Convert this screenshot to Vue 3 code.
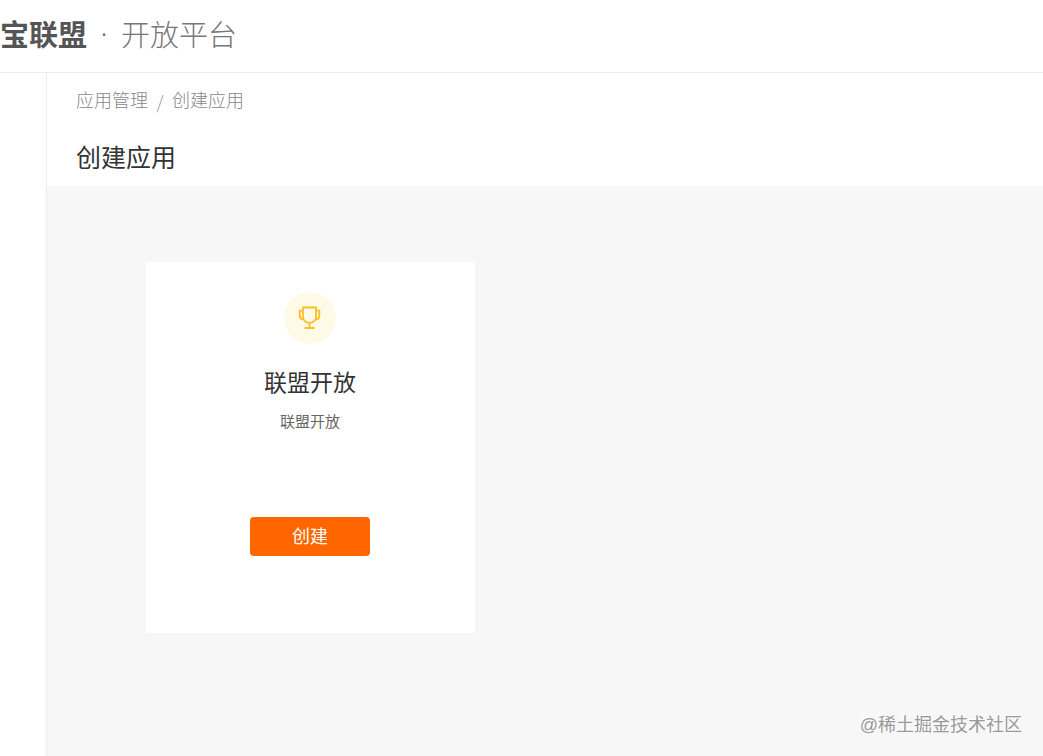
<script setup>
const crumbs = ['应用管理', '创建应用']
const apps = [{ title: '联盟开放', summary: '联盟开放' }]
</script>

<template>
  <div class="page">
    <header class="topbar">
      <strong class="brand">宝联盟</strong>
      <span class="dot">·</span>
      <span class="platform">开放平台</span>
    </header>
    <div class="body">
      <aside class="side"></aside>
      <main class="main">
        <div class="heading">
          <nav class="crumbs">
            <template v-for="(crumb, i) in crumbs" :key="crumb">
              <span v-if="i" class="slash">/</span>
              <a href="#">{{ crumb }}</a>
            </template>
          </nav>
          <h1>创建应用</h1>
        </div>
        <div class="content">
          <section v-for="app in apps" :key="app.title" class="card">
            <div class="badge">
              <svg width="24" height="24" viewBox="0 0 24 24" fill="none" stroke="#fcbe26" stroke-width="1.8">
                <path d="M5 1.500h13v9c0 3.800-2.800 6.300-6.500 6.300s-6.500-2.500-6.500-6.300z" />
                <path d="M5 4.700H1.700v5.300c0 2 1.300 3.200 3.500 3.700M18 4.700h3.300v5.300c0 2-1.300 3.200-3.500 3.700" />
                <path d="M11.500 17v5M6.500 22h10" />
              </svg>
            </div>
            <h2>{{ app.title }}</h2>
            <p>{{ app.summary }}</p>
            <button type="button">创建</button>
          </section>
        </div>
      </main>
    </div>
    <div class="watermark">@稀土掘金技术社区</div>
  </div>
</template>

<style>
body {
  margin: 0;
}
</style>

<style scoped>
.page {
  position: relative;
  display: flex;
  flex-direction: column;
  min-height: 100vh;
  background: #fff;
  color: #333;
  font-family: "Liberation Sans", "Noto Sans CJK SC", sans-serif;
}
.topbar {
  display: flex;
  align-items: center;
  box-sizing: border-box;
  height: 73px;
  padding-bottom: 6px;
  border-bottom: 1px solid #ededed;
  font-family: "Noto Sans CJK SC", sans-serif;
  font-size: 29px;
  line-height: 40px;
  white-space: nowrap;
}
.brand {
  color: #555;
  font-weight: 700;
}
.dot {
  width: 34px;
  color: #777;
  font-family: "Liberation Sans", sans-serif;
  font-size: 24px;
  text-align: center;
}
.platform {
  color: #777;
  font-weight: 300;
}
.body {
  display: flex;
  flex: 1;
}
.side {
  flex: none;
  width: 46px;
  border-right: 1px solid #ededed;
}
.main {
  display: flex;
  flex: 1;
  flex-direction: column;
}
.heading {
  padding: 16px 29px 11px;
}
.crumbs {
  display: flex;
  font-size: 18px;
  line-height: 24px;
  color: #888;
  font-weight: 300;
}
.crumbs a {
  color: inherit;
  text-decoration: none;
}
.slash {
  width: 24px;
  color: #999;
  font-family: "Noto Sans CJK SC", sans-serif;
  text-align: center;
}
h1 {
  margin: 28px 0 0;
  font-size: 25px;
  line-height: 34px;
  font-weight: 400;
}
.content {
  flex: 1;
  padding: 76px 99px;
  background: #f7f7f7;
}
.card {
  display: flex;
  flex-direction: column;
  align-items: center;
  box-sizing: border-box;
  width: 329px;
  min-height: 371px;
  padding: 30px 25px 30px 24px;
  border-radius: 2px;
  background: #fff;
}
.badge {
  display: flex;
  align-items: center;
  justify-content: center;
  width: 52px;
  height: 52px;
  border-radius: 50%;
  background: #fff9e7;
}
h2 {
  margin: 24px 0 0;
  font-size: 23px;
  line-height: 30px;
  font-weight: 400;
}
p {
  margin: 14px 0 0;
  color: #666;
  font-size: 15px;
  line-height: 20px;
}
button {
  width: 120px;
  height: 39px;
  margin-top: 85px;
  padding: 0;
  border: 0;
  border-radius: 4px;
  background: #ff6600;
  color: #fff;
  font-family: inherit;
  font-size: 18px;
  line-height: 24px;
  cursor: pointer;
}
.watermark {
  position: absolute;
  right: 21px;
  bottom: 19px;
  color: #999;
  font-size: 18px;
  line-height: 24px;
  text-shadow: -1px -1px 0 #fff;
}
</style>
